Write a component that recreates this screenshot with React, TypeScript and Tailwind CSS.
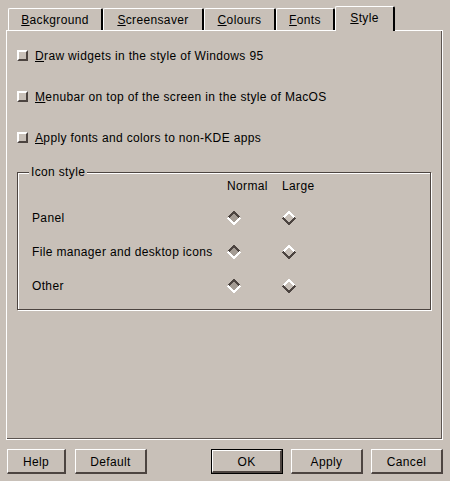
import React from 'react';

const tabs = [
  { key: 'B', rest: 'ackground', w: 'w-[95px]' },
  { key: 'S', rest: 'creensaver', w: 'w-[101px]' },
  { key: 'C', rest: 'olours', w: 'w-[72px]' },
  { key: 'F', rest: 'onts', w: 'w-[59px]' },
];

const Diamond = ({ on }: { on: boolean }) => (
  <svg width="14" height="14" viewBox="0 0 14 14" shapeRendering="crispEdges">
    <polygon points="7,1 13,7 7,13 1,7" fill={on ? '#a49c94' : 'none'} />
    <polyline points="1,7 7,1 13,7" fill="none" stroke={on ? '#4c4440' : '#ffffff'} strokeWidth="2.4" />
    <polyline points="1,7 7,13 13,7" fill="none" stroke={on ? '#ffffff' : '#4c4440'} strokeWidth="2.4" />
  </svg>
);

const Check = ({ u, rest }: { u: string; rest: string }) => (
  <div className="h-[41px] flex items-center gap-[7px]">
    <div className="w-[11px] h-[11px] border-2 border-t-white border-l-white border-b-[#4c4440] border-r-[#4c4440]" />
    <span>
      <span className="underline">{u}</span>
      {rest}
    </span>
  </div>
);

const Btn = ({ label, w, def }: { label: string; w: string; def?: boolean }) => (
  <div className={`${w} h-[25px] ${def ? 'border border-black' : ''}`}>
    <div className="w-full h-full flex items-center justify-center pt-px border-t border-l border-white border-r-2 border-b-2 border-r-[#4c4440] border-b-[#4c4440]">
      {label}
    </div>
  </div>
);

const rows = [
  { label: 'Panel', sel: 0 },
  { label: 'File manager and desktop icons', sel: 0 },
  { label: 'Other', sel: 0 },
];

export default function App() {
  return (
    <div
      className="w-[450px] h-[481px] bg-[#c8c0b8] text-black text-[12px] tracking-[0.35px] flex flex-col"
      style={{ fontFamily: '"Liberation Sans", Arial, sans-serif' }}
    >
      {/* Tab bar */}
      <div className="pt-[6px] pl-[8px] h-[30px] flex items-end">
        {tabs.map(t => (
          <div
            key={t.key}
            className={`${t.w} h-[22px] flex items-center justify-center border-t border-l border-white border-r-2 border-r-black rounded-t-[2px]`}
          >
            <span>
              <span className="underline">{t.key}</span>
              {t.rest}
            </span>
          </div>
        ))}
        <div className="relative z-10 w-[60px] h-[25px] -mb-px bg-[#c8c0b8] flex items-center justify-center pb-[2px] border-t border-l border-white border-r-2 border-r-black rounded-t-[2px]">
          <span>
            <span className="underline">S</span>tyle
          </span>
        </div>
      </div>

      {/* Tab panel */}
      <div className="ml-[6px] w-[437px] h-[410px] border-t border-l border-white border-r border-b border-black shadow-[inset_-1px_-1px_0_#5c5450] pl-[10px] pt-[4px]">
        <Check u="D" rest="raw widgets in the style of Windows 95" />
        <Check u="M" rest="enubar on top of the screen in the style of MacOS" />
        <Check u="A" rest="pply fonts and colors to non-KDE apps" />

        <div className="relative mt-[14px] w-[414px] h-[138px] border border-[#4c4440] shadow-[inset_1px_1px_0_#ffffff,1px_1px_0_#ffffff] pl-[14px] pt-[3px]">
          <span className="absolute left-[11px] -top-[8px] px-[2px] bg-[#c8c0b8] leading-[14px]">Icon style</span>
          <div className="h-[20px] flex items-center">
            <div className="w-[195px]" />
            <div className="w-[55px]">Normal</div>
            <div>Large</div>
          </div>
          <div className="mt-[5px]">
            {rows.map(r => (
              <div key={r.label} className="h-[34px] flex items-center">
                <div className="w-[195px]">{r.label}</div>
                <div className="w-[55px] flex">
                  <Diamond on={r.sel === 0} />
                </div>
                <div className="flex">
                  <Diamond on={r.sel === 1} />
                </div>
              </div>
            ))}
          </div>
        </div>
      </div>

      {/* Buttons */}
      <div className="mt-[9px] px-[7px] flex items-center">
        <Btn label="Help" w="w-[59px]" />
        <div className="ml-[9px]">
          <Btn label="Default" w="w-[72px]" />
        </div>
        <div className="flex-1" />
        <div className="flex gap-[8px]">
          <Btn label="OK" w="w-[72px]" def />
          <Btn label="Apply" w="w-[72px]" />
          <Btn label="Cancel" w="w-[72px]" />
        </div>
      </div>
    </div>
  );
}
